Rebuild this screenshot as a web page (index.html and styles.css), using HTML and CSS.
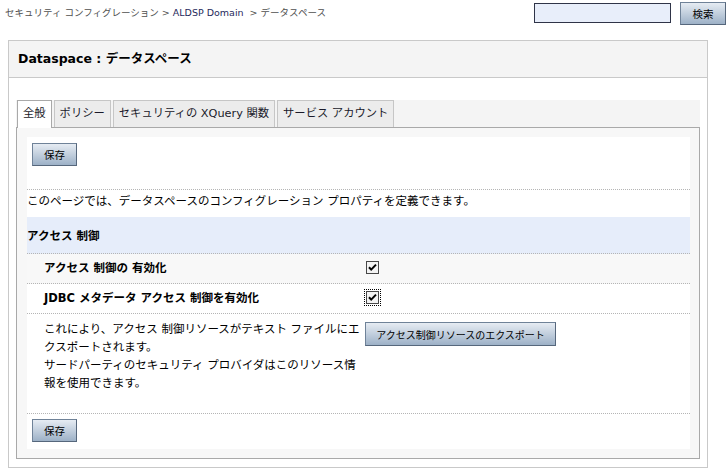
FILE: index.html
```html
<!DOCTYPE html>
<html lang="ja">
<head>
<meta charset="utf-8">
<title>データスペース</title>
<link rel="stylesheet" href="styles.css">
</head>
<body>
<div class="top">
  <div class="crumbs">セキュリティ コンフィグレーション &gt; <a href="#">ALDSP Domain</a> &nbsp;&gt; データスペース</div>
  <form class="search">
    <input class="search-input" type="text">
    <button class="btn search-btn" type="button">検索</button>
  </form>
</div>
<div class="panel">
  <div class="panel-head">Dataspace : データスペース</div>
  <div class="panel-body">
    <div class="tabs">
      <div class="tab active">全般</div>
      <div class="tab">ポリシー</div>
      <div class="tab">セキュリティの XQuery 関数</div>
      <div class="tab">サービス アカウント</div>
    </div>
    <div class="tab-content">
      <div class="sheet">
        <div class="btn-row"><button class="btn save-btn" type="button">保存</button></div>
        <div class="desc">このページでは、データスペースのコンフィグレーション プロパティを定義できます。</div>
        <div class="section">アクセス 制御</div>
        <div class="field alt">
          <div class="label">アクセス 制御の 有効化</div>
          <div class="value"><svg class="cb" width="13" height="13" viewBox="0 0 13 13"><rect x="0.5" y="0.5" width="12" height="12" fill="#f3f3f3" stroke="#474747"/><path d="M3 6.2 L5.2 8.6 L10 3.6" fill="none" stroke="#000" stroke-width="2"/></svg></div>
        </div>
        <div class="field">
          <div class="label">JDBC メタデータ アクセス 制御を有効化</div>
          <div class="value"><svg class="cb focus" width="13" height="13" viewBox="0 0 13 13"><rect x="0.5" y="0.5" width="12" height="12" fill="#f3f3f3" stroke="#474747"/><path d="M3 6.2 L5.2 8.6 L10 3.6" fill="none" stroke="#000" stroke-width="2"/></svg></div>
        </div>
        <div class="field tall">
          <div class="label">これにより、アクセス 制御リソースがテキスト ファイルにエ<br>クスポートされます。<br>サードパーティのセキュリティ プロバイダはこのリソース情<br>報を使用できます。</div>
          <div class="value"><button class="btn export-btn" type="button">アクセス制御リソースのエクスポート</button></div>
        </div>
        <div class="btn-row last"><button class="btn save-btn" type="button">保存</button></div>
      </div>
    </div>
  </div>
</div>
</body>
</html>
```
FILE: styles.css
```css
body {
  margin: 0;
  background: #fff;
  color: #000;
  font-family: "DejaVu Sans", "Noto Sans CJK JP", sans-serif;
}

.top {
  display: flex;
  justify-content: space-between;
  align-items: flex-start;
  height: 40px;
  padding: 0 2px 0 5px;
  box-sizing: border-box;
}

.crumbs {
  font-size: 9.5px;
  line-height: 14px;
  padding-top: 6px;
  color: #4f4f4f;
}

.crumbs a {
  color: #1f2a5c;
  text-decoration: none;
}

.search {
  display: flex;
  gap: 9px;
  margin: 0;
  padding-top: 2px;
}

.search-input {
  width: 137px;
  height: 20px;
  box-sizing: border-box;
  margin: 1px 0 0;
  padding: 0;
  border: 1px solid #2f3448;
  background: #e8eefa;
}

.btn {
  height: 23px;
  box-sizing: border-box;
  padding: 0;
  border: 1px solid #6f8298;
  border-bottom-color: #56677c;
  border-right-color: #56677c;
  background: linear-gradient(#e6ecf3, #9db1c7);
  font-family: "DejaVu Sans", "Noto Sans CJK JP", sans-serif;
  font-size: 10.5px;
  color: #000;
}

.search-btn {
  width: 46px;
}

.save-btn {
  width: 45px;
}

.export-btn {
  width: 191px;
  height: 24px;
  font-size: 10px;
}

.panel {
  margin-left: 8px;
  width: 700px;
  height: 428px;
  box-sizing: border-box;
  border: 1px solid #c9c9c9;
}

.panel-head {
  height: 36px;
  line-height: 36px;
  padding-left: 9px;
  background: #f4f4f4;
  border-bottom: 1px solid #c9c9c9;
  font-size: 12.5px;
  font-weight: bold;
}

.panel-body {
  padding: 22px 7px 7px;
}

.tabs {
  display: flex;
  gap: 2px;
  height: 27px;
  padding-left: 1px;
  background: #f4f4f4;
}

.tab {
  height: 26px;
  line-height: 26px;
  padding: 0 5px;
  border: 1px solid #c6c6c6;
  border-bottom: none;
  background: #ececec;
  font-size: 11.3px;
  color: #1a1a2a;
}

.tab.active {
  position: relative;
  z-index: 1;
  height: 27px;
  background: #fff;
  border-color: #a9a9a9;
}

.tab-content {
  height: 332px;
  box-sizing: border-box;
  padding: 9px 9px 9px 10px;
  border: 1px solid #a9a9a9;
  background: #f7f7f7;
}

.sheet {
  height: 100%;
  background: #fff;
  font-size: 11.5px;
}

.btn-row {
  padding: 6px 0 23px 5px;
  border-bottom: 1px dotted #b5b5b5;
}

.btn-row.last {
  padding: 5px 0 6px 5px;
  border-bottom: none;
}

.desc {
  padding: 3px 0 8px;
  line-height: 16px;
}

.section {
  padding: 11px 0 9px;
  line-height: 16px;
  font-weight: bold;
  background: #e6edfa;
  border-bottom: 1px dotted #b5b5b5;
}

.field {
  display: flex;
  border-bottom: 1px dotted #b5b5b5;
}

.field.alt {
  background: #f8f8f8;
}

.label {
  width: 338px;
  box-sizing: border-box;
  padding: 6px 4px 7px 17px;
  line-height: 16px;
  font-weight: bold;
}

.value {
  padding: 7px 0 0 1px;
}

.field.tall .label {
  padding: 6px 4px 21px 17px;
  line-height: 18px;
  font-weight: normal;
}

.field.tall .value {
  padding: 8px 0 0;
}

.cb {
  display: block;
}

.cb.focus {
  outline: 1px dotted #000;
  outline-offset: 1px;
}
```
